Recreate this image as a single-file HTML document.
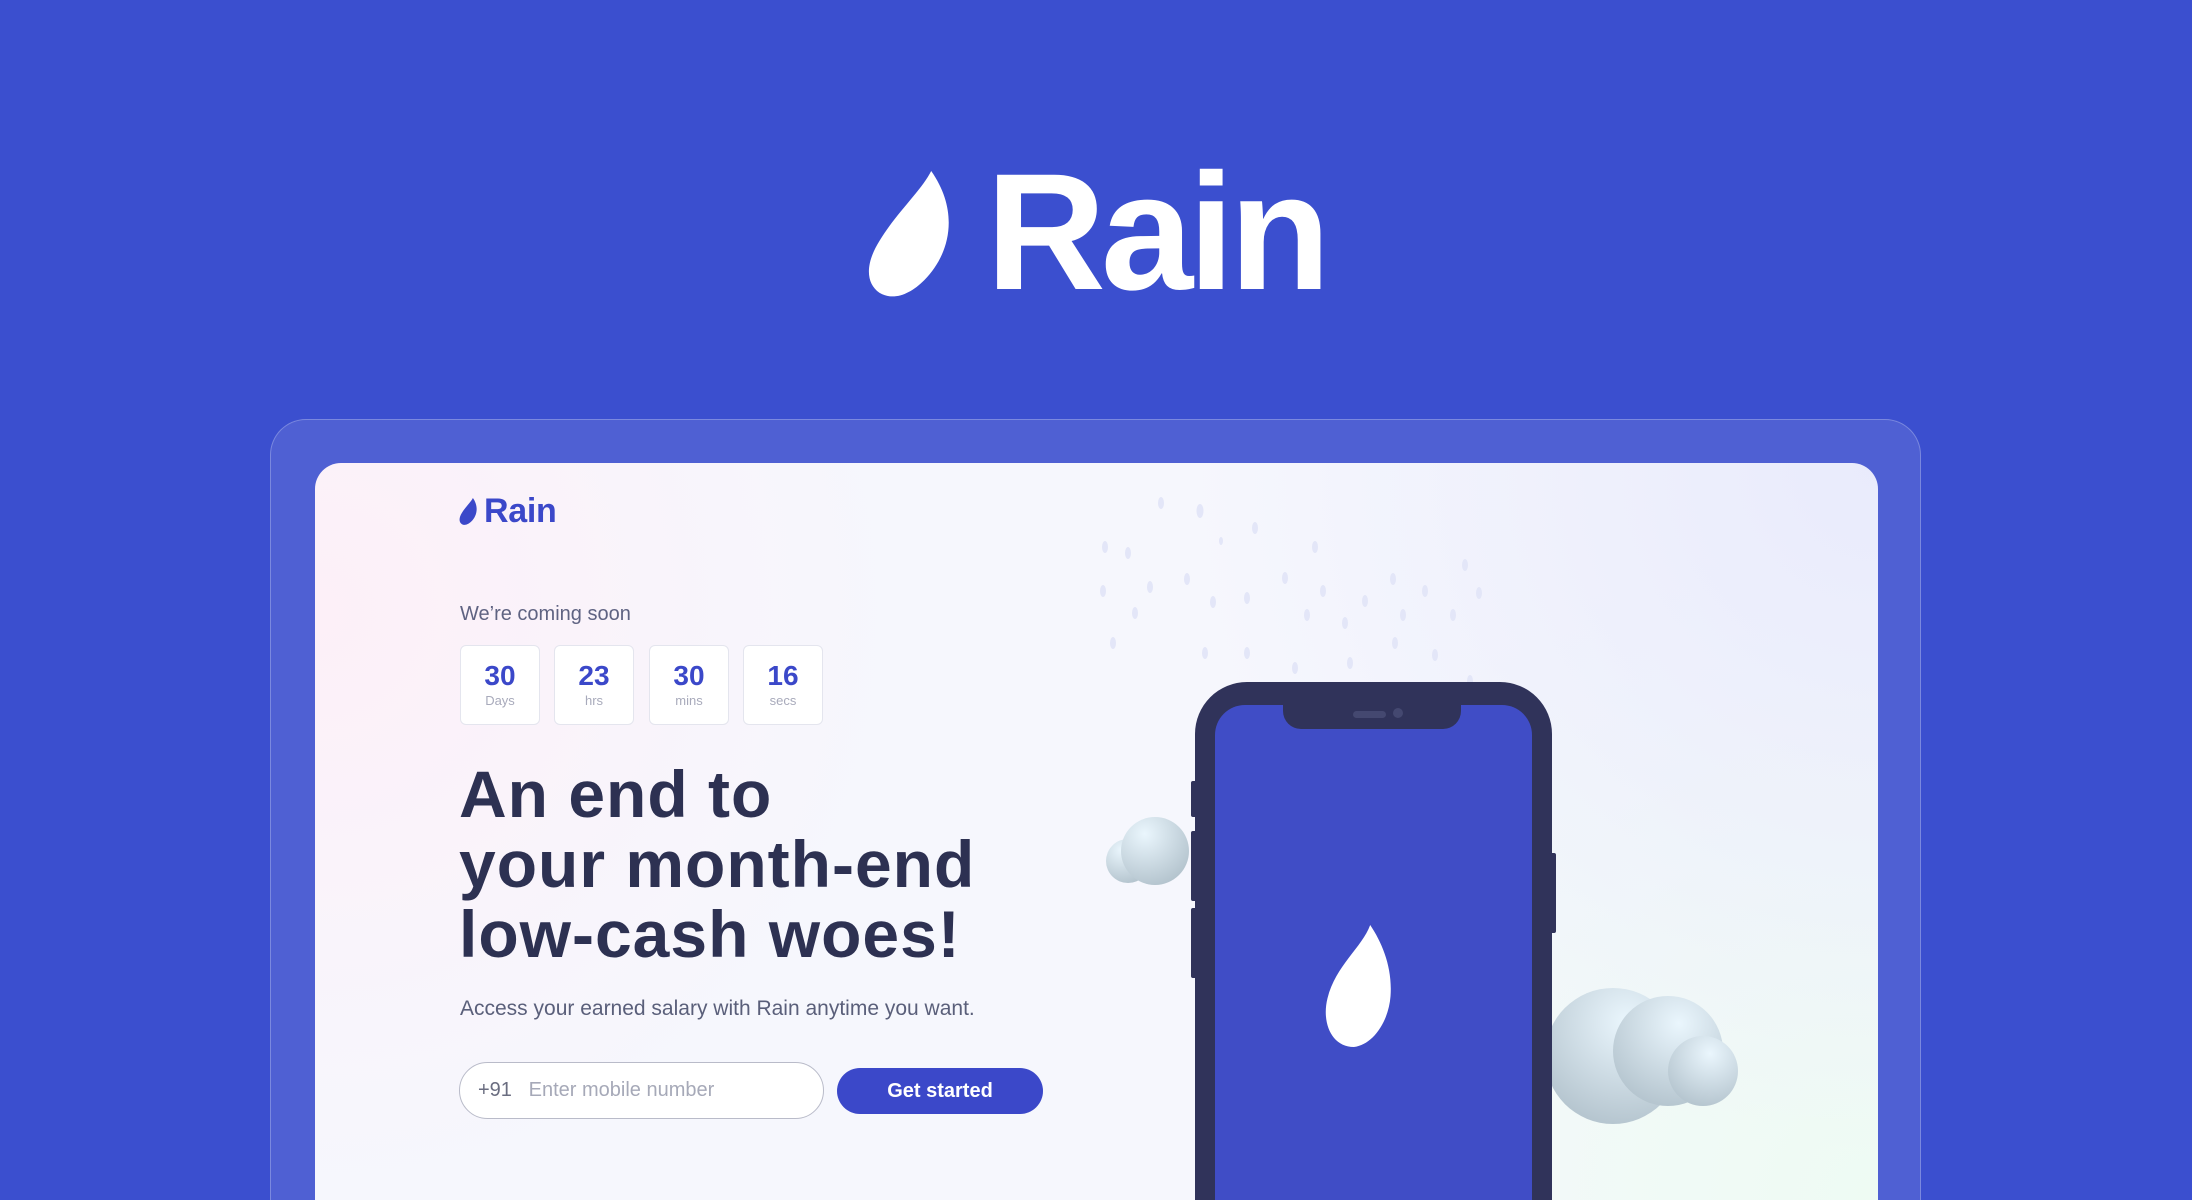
<!DOCTYPE html>
<html><head><meta charset="utf-8"><style>
*{margin:0;padding:0;box-sizing:border-box}
html,body{width:2192px;height:1200px;overflow:hidden}
body{background:#3B4FCF;position:relative;font-family:"Liberation Sans",sans-serif}
.abs{position:absolute}
.frame{left:270px;top:419px;width:1651px;height:781px;border-radius:36px 36px 0 0;background:rgba(255,255,255,0.1);border:1.5px solid rgba(255,255,255,0.25);border-bottom:none}
.card{left:315px;top:463px;width:1563px;height:737px;border-radius:26px 26px 0 0;overflow:hidden;
background:radial-gradient(circle at 0% 20%,#fdf0f8 0,rgba(253,240,248,0) 35%),radial-gradient(circle at 100% 0%,#e9ebfc 0,rgba(233,235,252,0) 40%),radial-gradient(circle at 100% 100%,#eefbf3 0,rgba(238,251,243,0) 40%),#f6f7fd}
.box{top:182px;width:80px;height:80px;border:1.5px solid #e4e5ee;border-radius:6px;background:#fff;text-align:center}
.box b{display:block;margin-top:15px;font-size:28px;color:#3B48C9;line-height:30px}
.box span{display:block;font-size:13px;color:#a8aabb;margin-top:2px}
h1{position:absolute;left:144px;top:296px;font-size:66px;line-height:70px;color:#2d3152;font-weight:bold;letter-spacing:1px}
.drop{fill:#e3e6f8}
</style></head><body>
<svg class="abs" style="left:866px;top:171px" width="94" height="126" viewBox="0 0 64 90"><path d="M45 0C38 14 20 30 8 50C-2 66 -2 80 8 87C18 93 30 88 40 78C58 60 66 30 45 0Z" fill="#fff"/></svg>
<div class="abs" style="left:986px;top:150px;font-size:166px;line-height:166px;color:#fff;letter-spacing:-5px;font-weight:bold">Rain</div>
<div class="abs frame"></div>
<div class="abs card">
 <svg class="abs" style="left:144px;top:35px" width="20" height="27" viewBox="0 0 64 90"><path d="M45 0C38 14 20 30 8 50C-2 66 -2 80 8 87C18 93 30 88 40 78C58 60 66 30 45 0Z" fill="#3B48C9"/></svg>
 <div class="abs" style="left:169px;top:29px;font-size:34px;color:#3B48C9;letter-spacing:-0.3px;font-weight:bold">Rain</div>
 <div class="abs" style="left:145px;top:140px;font-size:20px;color:#5f6382">We’re coming soon</div>
 <div class="abs box" style="left:145px"><b>30</b><span>Days</span></div>
 <div class="abs box" style="left:239px"><b>23</b><span>hrs</span></div>
 <div class="abs box" style="left:334px"><b>30</b><span>mins</span></div>
 <div class="abs box" style="left:428px"><b>16</b><span>secs</span></div>
 <h1>An end to<br>your month-end<br>low-cash woes!</h1>
 <div class="abs" style="left:145px;top:534px;font-size:21px;color:#5a5f7a">Access your earned salary with Rain anytime you want.</div>
 <div class="abs" style="left:144px;top:599px;width:365px;height:57px;border:1.5px solid #b9bbc9;border-radius:29px;background:#fff;font-size:20px;line-height:54px;padding-left:18px;color:#8a8da0"><span style="color:#6a6d80">+91</span>&nbsp;&nbsp;&nbsp;<span style="color:#a6a9b8">Enter mobile number</span></div>
 <div class="abs" style="left:522px;top:605px;width:206px;height:46px;border-radius:23px;background:#3B48C9;color:#fff;font-weight:bold;font-size:20px;line-height:46px;text-align:center">Get started</div>
 <svg class="abs" style="left:780px;top:20px" width="450" height="200">
  <g class="drop">
  <ellipse cx="66" cy="20" rx="3" ry="6"/><ellipse cx="105" cy="28" rx="3.5" ry="7"/><ellipse cx="126" cy="58" rx="2" ry="4"/><ellipse cx="160" cy="45" rx="3" ry="6"/><ellipse cx="33" cy="70" rx="3" ry="6"/><ellipse cx="8" cy="108" rx="3" ry="6"/><ellipse cx="55" cy="104" rx="3" ry="6"/><ellipse cx="92" cy="96" rx="3" ry="6"/><ellipse cx="118" cy="119" rx="3" ry="6"/><ellipse cx="40" cy="130" rx="3" ry="6"/><ellipse cx="152" cy="115" rx="3" ry="6"/><ellipse cx="190" cy="95" rx="3" ry="6"/><ellipse cx="228" cy="108" rx="3" ry="6"/><ellipse cx="212" cy="132" rx="3" ry="6"/><ellipse cx="250" cy="140" rx="3" ry="6"/><ellipse cx="270" cy="118" rx="3" ry="6"/><ellipse cx="298" cy="96" rx="3" ry="6"/><ellipse cx="330" cy="108" rx="3" ry="6"/><ellipse cx="308" cy="132" rx="3" ry="6"/><ellipse cx="358" cy="132" rx="3" ry="6"/><ellipse cx="110" cy="170" rx="3" ry="6"/><ellipse cx="18" cy="160" rx="3" ry="6"/><ellipse cx="152" cy="170" rx="3" ry="6"/><ellipse cx="255" cy="180" rx="3" ry="6"/><ellipse cx="200" cy="185" rx="3" ry="6"/><ellipse cx="340" cy="172" rx="3" ry="6"/><ellipse cx="375" cy="198" rx="3" ry="6"/><ellipse cx="220" cy="64" rx="3" ry="6"/><ellipse cx="10" cy="64" rx="3" ry="6"/><ellipse cx="300" cy="160" rx="3" ry="6"/><ellipse cx="370" cy="82" rx="3" ry="6"/><ellipse cx="384" cy="110" rx="3" ry="6"/>
  </g></svg>
 <svg class="abs" style="left:788px;top:346px" width="110" height="90"><defs><radialGradient id="cl" cx="0.35" cy="0.25" r="0.8"><stop offset="0" stop-color="#eaf6fd"/><stop offset="1" stop-color="#b3c3cd"/></radialGradient></defs><g fill="url(#cl)"><circle cx="25" cy="52" r="22"/><circle cx="52" cy="42" r="34"/></g></svg>
 <svg class="abs" style="left:1228px;top:518px" width="200" height="150"><defs><radialGradient id="cl2" cx="0.6" cy="0.25" r="0.8"><stop offset="0" stop-color="#eaf6fd"/><stop offset="1" stop-color="#b3c3cd"/></radialGradient></defs><g fill="url(#cl2)"><circle cx="70" cy="75" r="68"/><circle cx="125" cy="70" r="55"/><circle cx="160" cy="90" r="35"/></g></svg>
 <div class="abs" style="left:880px;top:219px;width:357px;height:600px;background:#30335a;border-radius:52px 52px 0 0"></div>
 <div class="abs" style="left:876px;top:318px;width:8px;height:36px;background:#30335a;border-radius:2px"></div>
 <div class="abs" style="left:876px;top:368px;width:8px;height:70px;background:#30335a;border-radius:2px"></div>
 <div class="abs" style="left:876px;top:445px;width:8px;height:70px;background:#30335a;border-radius:2px"></div>
 <div class="abs" style="left:1233px;top:390px;width:8px;height:80px;background:#30335a;border-radius:2px"></div>
 <div class="abs" style="left:900px;top:242px;width:317px;height:560px;background:#404DC6;border-radius:30px 30px 0 0"></div>
 <div class="abs" style="left:968px;top:238px;width:178px;height:28px;background:#30335a;border-radius:0 0 18px 18px"></div>
 <div class="abs" style="left:1038px;top:248px;width:33px;height:7px;background:#444870;border-radius:4px"></div>
 <div class="abs" style="left:1078px;top:245px;width:10px;height:10px;background:#444870;border-radius:50%"></div>
 <svg class="abs" style="left:1009px;top:462px" width="68" height="122" viewBox="0 0 64 120"><path d="M44 0C36 22 10 40 2 72C-4 96 6 120 28 120C46 118 62 96 64 70C66 42 56 18 44 0Z" fill="#fff"/></svg>
</div>
</body></html>
